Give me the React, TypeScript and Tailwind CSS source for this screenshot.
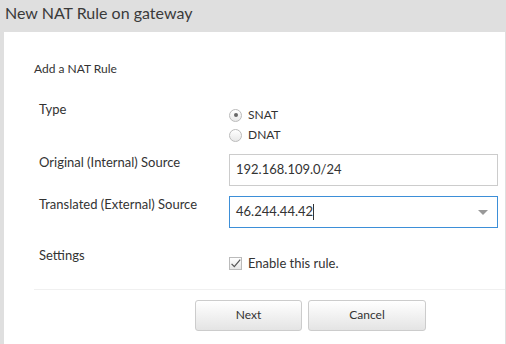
export default function App() {
  return (
    <div
      className="w-[506px] h-[344px] bg-[#dfdfdf] flex flex-col text-[#333] overflow-hidden"
      style={{ fontFamily: "Lato, 'Open Sans', sans-serif" }}
    >
      <header className="h-8 pl-[5px] text-[16px] leading-[25px] text-[#3a3a3a]">
        New NAT Rule on gateway
      </header>

      <main className="ml-1 mr-px flex-1 bg-white flex flex-col">
        <div className="pl-[30px] pt-[29px] text-[12px] leading-4">Add a NAT Rule</div>

        <div className="pl-[35px] pr-[7px] mt-[20px] grid grid-cols-[190px_1fr] items-start text-[13px]">
          <div className="pt-[4px] leading-4">Type</div>
          <div className="flex flex-col gap-1 pt-[10px]">
            <label className="flex items-center gap-[6px] text-[12px] leading-4">
              <span className="w-[13px] h-[13px] rounded-full border border-[#bbb] bg-gradient-to-b from-white to-[#e8e8e8] flex items-center justify-center">
                <span className="w-1 h-1 rounded-full bg-[#666]" />
              </span>
              SNAT
            </label>
            <label className="flex items-center gap-[6px] text-[12px] leading-4">
              <span className="w-[13px] h-[13px] rounded-full border border-[#bbb] bg-gradient-to-b from-white to-[#e8e8e8]" />
              DNAT
            </label>
          </div>

          <div className="mt-[11px] leading-4">Original (Internal) Source</div>
          <div className="mt-[11px] h-8 border border-[#ccc] flex items-center px-[6px] text-[13px]">
            192.168.109.0/24
          </div>

          <div className="mt-[10px] leading-4">Translated (External) Source</div>
          <div className="mt-[10px] h-8 border border-[#3d8fd8] flex items-center pl-[6px] pr-[9px] text-[13px]">
            <span>46.244.44.42</span>
            <span className="w-px h-4 bg-[#333]" />
            <span className="ml-auto w-0 h-0 border-l-[5px] border-r-[5px] border-t-[5px] border-l-transparent border-r-transparent border-t-[#999]" />
          </div>

          <div className="mt-[19px] leading-4">Settings</div>
          <label className="mt-[26px] flex items-center gap-[6px] text-[13px]">
            <span className="w-[13px] h-[13px] border border-[#bbb] bg-gradient-to-b from-white to-[#e6e6e6] flex items-center justify-center">
              <svg viewBox="0 0 14 14" className="w-[13px] h-[13px]">
                <path d="M2 7.5 L5.5 11 L13 2" fill="none" stroke="#555" strokeWidth="1.6" />
              </svg>
            </span>
            Enable this rule.
          </label>
        </div>

        <div className="ml-[30px] mt-[15px] border-t border-[#f0f0f0]" />

        <div className="flex gap-[6px] pl-[191px] mt-[10px]">
          <button className="w-[107px] h-[31px] rounded-[3px] border border-[#ccc] bg-gradient-to-b from-white to-[#e4e4e4] text-[12px] text-[#333]">
            Next
          </button>
          <button className="w-[118px] h-[31px] rounded-[3px] border border-[#ccc] bg-gradient-to-b from-white to-[#e4e4e4] text-[12px] text-[#333]">
            Cancel
          </button>
        </div>
      </main>
    </div>
  );
}
